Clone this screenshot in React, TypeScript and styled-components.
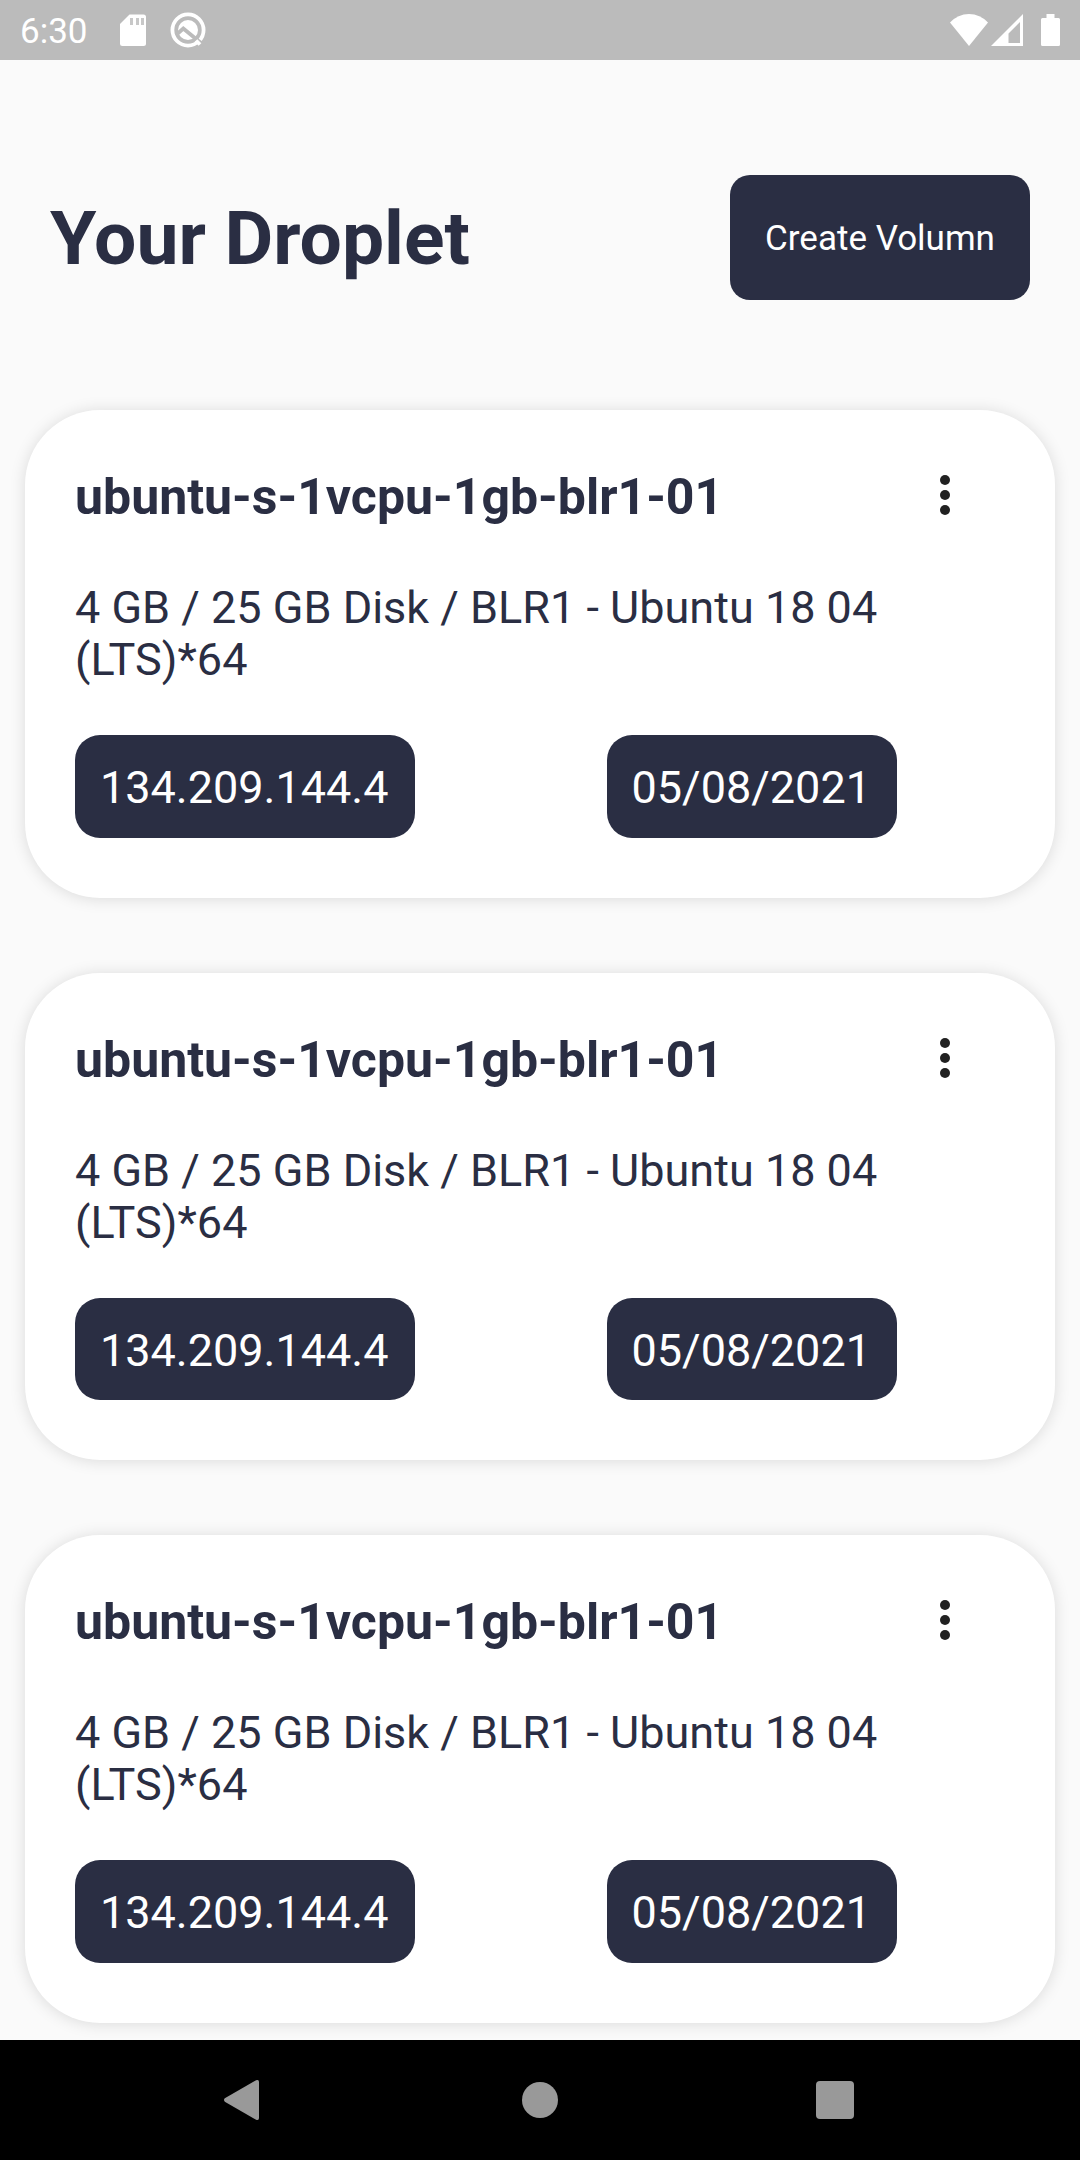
import React from "react";
import styled, { createGlobalStyle } from "styled-components";

const GlobalStyle = createGlobalStyle`
  *, *::before, *::after { box-sizing: border-box; }
  body { margin: 0; background: #fafafa; font-family: Roboto, sans-serif; }
`;

const Screen = styled.div`
  display: flex;
  flex-direction: column;
  width: 1080px;
  height: 2160px;
  overflow: hidden;
  background: #fafafa;
  color: #2a2e43;
`;

const StatusBar = styled.header`
  flex: none;
  display: flex;
  align-items: center;
  justify-content: space-between;
  height: 60px;
  padding: 0 20px;
  background: #bbbbbb;
  color: #fff;
`;

const StatusGroup = styled.div<{ $gap?: number }>`
  display: flex;
  align-items: center;
  gap: ${({ $gap = 0 }) => $gap}px;
`;

const Clock = styled.span`
  width: 99px;
  font-size: 35px;
  line-height: 41px;
  padding-top: 2px;
`;

const Content = styled.main`
  flex: 1;
  min-height: 0;
  overflow: hidden;
`;

const TitleBar = styled.div`
  display: flex;
  align-items: center;
  justify-content: space-between;
  height: 350px;
  padding: 5px 50px 0;
`;

const Title = styled.h1`
  margin: 0;
  font-size: 75px;
  font-weight: 700;
  line-height: 88px;
`;

const CreateButton = styled.button`
  width: 300px;
  height: 125px;
  padding: 2px 0 0;
  border: 0;
  border-radius: 20px;
  background: #2a2e43;
  color: #fff;
  font: 400 35px/41px Roboto, sans-serif;
`;

const DropletList = styled.section`
  display: flex;
  flex-direction: column;
  gap: 75px;
  padding: 0 25px;
`;

const Card = styled.article`
  flex: none;
  height: 487.5px;
  padding: 25px 50px 0;
  border-radius: 75px;
  background: #fff;
  box-shadow: 0 1px 16px rgba(0, 0, 0, 0.13);
`;

const CardHeader = styled.div`
  display: flex;
  align-items: center;
  justify-content: space-between;
  height: 120px;
`;

const DropletName = styled.h2`
  margin: 0;
  padding-top: 5px;
  font-size: 50px;
  font-weight: 700;
  line-height: 59px;
`;

const MenuButton = styled.button`
  display: grid;
  place-items: center;
  width: 120px;
  height: 120px;
  padding: 0;
  border: 0;
  background: none;
  color: #212121;
`;

const Specs = styled.p`
  width: 830px;
  margin: 27px 0 49px;
  font-size: 45px;
  line-height: 52px;
`;

const ChipRow = styled.div`
  display: flex;
  gap: 191.5px;
`;

const Chip = styled.span<{ $width: number }>`
  width: ${({ $width }) => $width}px;
  height: 102.5px;
  padding: 26px 0 0 25px;
  border-radius: 25px;
  background: #2a2e43;
  color: #fff;
  font-size: 45px;
  line-height: 53px;
  white-space: nowrap;
`;

const NavBar = styled.nav`
  flex: none;
  display: flex;
  align-items: center;
  justify-content: space-between;
  height: 120px;
  padding: 0 215px;
  background: #000;
`;

const NavButton = styled.button`
  display: grid;
  place-items: center;
  width: 60px;
  height: 60px;
  padding: 0;
  border: 0;
  background: none;
  color: #999;
`;

const Icon = styled.svg`
  display: block;
  flex: none;
  fill: currentColor;
`;

const SdCardIcon = () => (
  <Icon width="28" height="34" viewBox="0 0 28 34">
    <path d="M10.5 1.500H24.500Q27 1.500 27 4V30.500Q27 33 24.500 33H3.500Q1 33 1 30.500V11Z" />
    <path fill="#c8c8c8" d="M11 5h3v7h-3zM17 5h3v7h-3zM22 5h3v7h-3z" />
  </Icon>
);

const SearchBadgeIcon = () => (
  <Icon width="36" height="36" viewBox="0 0 36 36">
    <circle cx="18" cy="18" r="15.600" fill="none" stroke="currentColor" strokeWidth="3.800" />
    <circle cx="18" cy="18" r="10" />
    <path d="M6 23L13.300 16.500L34 33.500" fill="none" stroke="#bbb" strokeWidth="3.800" />
    <path d="M26 28.500L30 32.500" fill="none" stroke="currentColor" strokeWidth="3.800" />
  </Icon>
);

const WifiIcon = () => (
  <Icon width="38" height="32" viewBox="0 0 38 32">
    <path d="M0 8.500Q8 0 19 0T38 8.500L19 32Z" />
  </Icon>
);

const SignalIcon = () => (
  <Icon width="32" height="32" viewBox="0 0 32 32">
    <path fillRule="evenodd" d="M32 0V32H0ZM29 8L17.500 19.500V29H29Z" />
  </Icon>
);

const BatteryIcon = () => (
  <Icon width="19" height="32" viewBox="0 0 19 32">
    <path d="M5.500 0H13.500V4H17.500Q19 4 19 5.500V30.500Q19 32 17.500 32H1.500Q0 32 0 30.500V5.500Q0 4 1.500 4H5.500Z" />
  </Icon>
);

const MoreIcon = () => (
  <Icon width="60" height="60" viewBox="0 0 60 60">
    <circle cx="30" cy="15" r="5" />
    <circle cx="30" cy="30" r="5" />
    <circle cx="30" cy="45" r="5" />
  </Icon>
);

const BackIcon = () => (
  <Icon width="60" height="60" viewBox="0 0 60 60">
    <path d="M9.800 28.300L41 10.300Q44 9 44 12V48Q44 51 41 49.700L9.800 31.700Q8.200 30 9.800 28.300Z" />
  </Icon>
);

const HomeIcon = () => (
  <Icon width="60" height="60" viewBox="0 0 60 60">
    <circle cx="30" cy="30" r="18" />
  </Icon>
);

const RecentsIcon = () => (
  <Icon width="60" height="60" viewBox="0 0 60 60">
    <rect x="11" y="11" width="38" height="38" rx="4" />
  </Icon>
);

interface Droplet {
  id: number;
  name: string;
  specs: string;
  ip: string;
  created: string;
}

const droplets: Droplet[] = [1, 2, 3].map((id) => ({
  id,
  name: "ubuntu-s-1vcpu-1gb-blr1-01",
  specs: "4 GB / 25 GB Disk / BLR1 - Ubuntu 18 04 (LTS)*64",
  ip: "134.209.144.4",
  created: "05/08/2021",
}));

const DropletCard = ({ droplet }: { droplet: Droplet }) => (
  <Card>
    <CardHeader>
      <DropletName>{droplet.name}</DropletName>
      <MenuButton aria-label="More">
        <MoreIcon />
      </MenuButton>
    </CardHeader>
    <Specs>{droplet.specs}</Specs>
    <ChipRow>
      <Chip $width={340}>{droplet.ip}</Chip>
      <Chip $width={290}>{droplet.created}</Chip>
    </ChipRow>
  </Card>
);

export default function App() {
  return (
    <>
      <GlobalStyle />
      <Screen>
        <StatusBar>
          <StatusGroup>
            <Clock>6:30</Clock>
            <StatusGroup $gap={23}>
              <SdCardIcon />
              <SearchBadgeIcon />
            </StatusGroup>
          </StatusGroup>
          <StatusGroup $gap={18}>
            <StatusGroup $gap={3}>
              <WifiIcon />
              <SignalIcon />
            </StatusGroup>
            <BatteryIcon />
          </StatusGroup>
        </StatusBar>
        <Content>
          <TitleBar>
            <Title>Your Droplet</Title>
            <CreateButton>Create Volumn</CreateButton>
          </TitleBar>
          <DropletList>
            {droplets.map((droplet) => (
              <DropletCard key={droplet.id} droplet={droplet} />
            ))}
          </DropletList>
        </Content>
        <NavBar>
          <NavButton aria-label="Back">
            <BackIcon />
          </NavButton>
          <NavButton aria-label="Home">
            <HomeIcon />
          </NavButton>
          <NavButton aria-label="Recents">
            <RecentsIcon />
          </NavButton>
        </NavBar>
      </Screen>
    </>
  );
}
